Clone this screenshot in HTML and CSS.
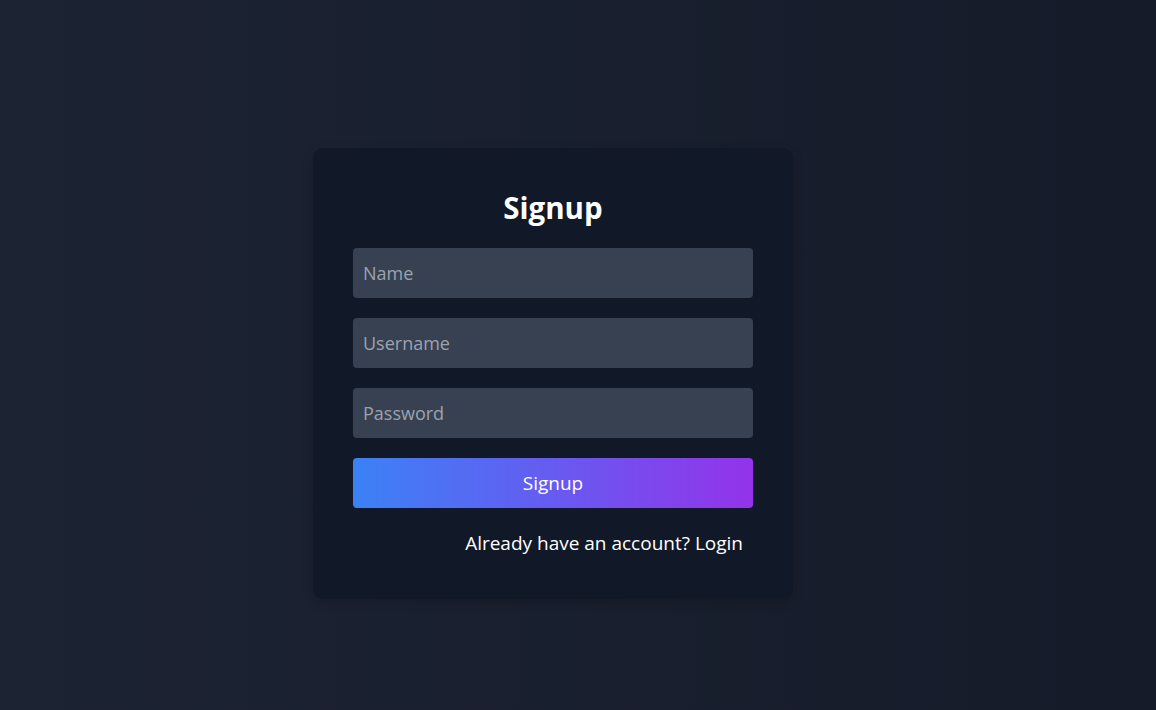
FILE: index.html
```html
<!DOCTYPE html>
<html lang="en">
<head>
    <meta charset="UTF-8">
    <meta name="viewport" content="width=device-width, initial-scale=1.0">
    <title>Signup</title>
    <link rel="stylesheet" href="styles.css">
</head>
<body>
    <div class="container">
        <h2>Signup</h2>
        <form class="signup-form">
            <input type="text" placeholder="Name">
            <input type="text" placeholder="Username">
            <input type="password" placeholder="Password">
            <button type="button">Signup</button>
        </form>
        <p class="switch">Already have an account? <a href="#">Login</a></p>
    </div>
</body>
</html>
```

FILE: styles.css
```css
body {
    font-family: "Open Sans", "Noto Sans", sans-serif;
    display: flex;
    align-items: center;
    justify-content: center;
    height: 100vh;
    margin: 0;
    background: linear-gradient(to right, #1c2333, #151b29);
    color: white;
}
.container {
    background: #111827;
    padding: 40px;
    border-radius: 10px;
    box-shadow: 0 4px 12px rgba(0, 0, 0, 0.15);
    width: 400px;
    margin: 36px 50px 0 0;
}
h2 {
    margin: 0 0 20px;
    font-size: 29.5px;
    line-height: 40px;
    text-align: center;
    font-weight: 700;
}
.signup-form {
    display: flex;
    flex-direction: column;
    gap: 20px;
}
input {
    height: 50px;
    padding: 0 10px;
    box-sizing: border-box;
    background: #374151;
    color: white;
    border: none;
    border-radius: 4px;
    font-family: inherit;
    font-size: 18px;
}
input::placeholder {
    color: #9ca3af;
}
button {
    height: 50px;
    background: linear-gradient(to right, #3b82f6, #9333ea);
    color: white;
    border: none;
    border-radius: 4px;
    font-family: inherit;
    font-size: 19px;
    cursor: pointer;
}
.switch {
    margin: 20px 0 0;
    padding-right: 10px;
    text-align: right;
    font-size: 19px;
    line-height: 31px;
}
.switch a {
    color: white;
    text-decoration: none;
}
```
